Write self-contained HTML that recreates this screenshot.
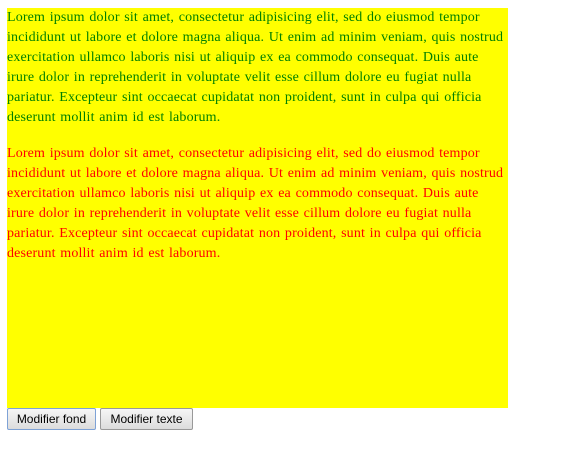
<!DOCTYPE html>
<html><head><style>
body{margin:8px 0 0 7px;font-family:"Liberation Serif",serif;background:#fff;}
#box{width:501px;height:400px;background:#ff0;font-size:14px;line-height:20px;text-align:left;overflow:hidden;white-space:nowrap;word-spacing:1px;letter-spacing:0.15px}
p{margin:0 0 16px 0}
.g{color:#008000}.r{color:#f00}
button{font-family:"Liberation Sans",sans-serif;font-size:12px;height:22px;padding:0 7px;margin:0 2px 0 0;border:1px solid #999;border-radius:2px;background:linear-gradient(#f6f6f6,#dcdcdc);color:#000;vertical-align:top}
.b1{width:89px;border-color:#7ea2d6}
.b2{width:93px}
</style></head><body>
<div id="box">
<p class="g">Lorem ipsum dolor sit amet, consectetur adipisicing elit, sed do eiusmod tempor<br>incididunt ut labore et dolore magna aliqua. Ut enim ad minim veniam, quis nostrud<br>exercitation ullamco laboris nisi ut aliquip ex ea commodo consequat. Duis aute<br>irure dolor in reprehenderit in voluptate velit esse cillum dolore eu fugiat nulla<br>pariatur. Excepteur sint occaecat cupidatat non proident, sunt in culpa qui officia<br>deserunt mollit anim id est laborum.</p>
<p class="r">Lorem ipsum dolor sit amet, consectetur adipisicing elit, sed do eiusmod tempor<br>incididunt ut labore et dolore magna aliqua. Ut enim ad minim veniam, quis nostrud<br>exercitation ullamco laboris nisi ut aliquip ex ea commodo consequat. Duis aute<br>irure dolor in reprehenderit in voluptate velit esse cillum dolore eu fugiat nulla<br>pariatur. Excepteur sint occaecat cupidatat non proident, sunt in culpa qui officia<br>deserunt mollit anim id est laborum.</p>
</div>
<div><button class="b1">Modifier fond</button><button class="b2" style="margin-left:2px">Modifier texte</button></div>
</body></html>
